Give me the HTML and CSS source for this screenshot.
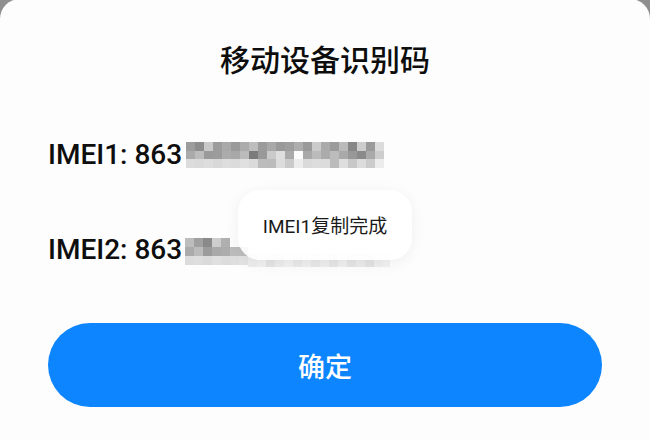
FILE: index.html
```html
<!DOCTYPE html>
<html lang="zh-CN">
<head>
<meta charset="utf-8">
<title>移动设备识别码</title>
<link rel="stylesheet" href="styles.css">
</head>
<body>
<div class="sheet">
  <h1 class="title">移动设备识别码</h1>
  <div class="row row-first">
    <span class="label">IMEI1: 863</span>
    <svg class="mosaic" width="198" height="26" viewBox="0 0 198 26" shape-rendering="crispEdges">
      <g>
        <rect x="0" y="0" width="9" height="9" fill="#9d9d9d"/><rect x="9" y="0" width="9" height="9" fill="#8d8d8d"/><rect x="18" y="0" width="9" height="9" fill="#c9c9c9"/><rect x="27" y="0" width="9" height="9" fill="#9c9c9c"/><rect x="36" y="0" width="9" height="9" fill="#a9a9a9"/><rect x="45" y="0" width="9" height="9" fill="#9a9a9a"/><rect x="54" y="0" width="9" height="9" fill="#ababab"/><rect x="63" y="0" width="9" height="9" fill="#bdbdbd"/><rect x="72" y="0" width="9" height="9" fill="#9b9b9b"/><rect x="81" y="0" width="9" height="9" fill="#a8a8a8"/><rect x="90" y="0" width="9" height="9" fill="#999"/><rect x="99" y="0" width="9" height="9" fill="#9e9e9e"/><rect x="108" y="0" width="9" height="9" fill="#adadad"/><rect x="117" y="0" width="9" height="9" fill="#9a9a9a"/><rect x="126" y="0" width="9" height="9" fill="#cbcbcb"/><rect x="135" y="0" width="9" height="9" fill="#aaa"/><rect x="144" y="0" width="9" height="9" fill="#9b9b9b"/><rect x="153" y="0" width="9" height="9" fill="#bababa"/><rect x="162" y="0" width="9" height="9" fill="#878787"/><rect x="171" y="0" width="9" height="9" fill="#cdcdcd"/><rect x="180" y="0" width="9" height="9" fill="#9a9a9a"/><rect x="189" y="0" width="9" height="9" fill="#dcdcdc"/>
        <rect x="0" y="9" width="9" height="8" fill="#aaa"/><rect x="9" y="9" width="9" height="8" fill="#bcbcbc"/><rect x="18" y="9" width="9" height="8" fill="#9a9a9a"/><rect x="27" y="9" width="9" height="8" fill="#9c9c9c"/><rect x="36" y="9" width="9" height="8" fill="#acacac"/><rect x="45" y="9" width="9" height="8" fill="#a8a8a8"/><rect x="54" y="9" width="9" height="8" fill="#bbb"/><rect x="63" y="9" width="9" height="8" fill="#7b7b7b"/><rect x="72" y="9" width="9" height="8" fill="#999"/><rect x="81" y="9" width="9" height="8" fill="#cacaca"/><rect x="90" y="9" width="9" height="8" fill="#dedede"/><rect x="99" y="9" width="9" height="8" fill="#aaa"/><rect x="108" y="9" width="9" height="8" fill="#fdfdfd"/><rect x="117" y="9" width="9" height="8" fill="#a9a9a9"/><rect x="126" y="9" width="9" height="8" fill="#bbb"/><rect x="135" y="9" width="9" height="8" fill="#ababab"/><rect x="144" y="9" width="9" height="8" fill="#bcbcbc"/><rect x="153" y="9" width="9" height="8" fill="#a9a9a9"/><rect x="162" y="9" width="9" height="8" fill="#989898"/><rect x="171" y="9" width="9" height="8" fill="#8a8a8a"/><rect x="180" y="9" width="9" height="8" fill="#aaa"/><rect x="189" y="9" width="9" height="8" fill="#cdcdcd"/>
        <rect x="0" y="17" width="9" height="9" fill="#dcdcdc"/><rect x="9" y="17" width="9" height="9" fill="#dadada"/><rect x="18" y="17" width="9" height="9" fill="#ddd"/><rect x="27" y="17" width="9" height="9" fill="#d8d8d8"/><rect x="36" y="17" width="9" height="9" fill="#ddd"/><rect x="45" y="17" width="9" height="9" fill="#dbdbdb"/><rect x="54" y="17" width="9" height="9" fill="#e0e0e0"/><rect x="63" y="17" width="9" height="9" fill="#dadada"/><rect x="72" y="17" width="9" height="9" fill="#bcbcbc"/><rect x="81" y="17" width="9" height="9" fill="#bbb"/><rect x="90" y="17" width="9" height="9" fill="#dcdcdc"/><rect x="99" y="17" width="9" height="9" fill="#cacaca"/><rect x="108" y="17" width="9" height="9" fill="#ececec"/><rect x="117" y="17" width="9" height="9" fill="#dadada"/><rect x="126" y="17" width="9" height="9" fill="#ddd"/><rect x="135" y="17" width="9" height="9" fill="#dcdcdc"/><rect x="144" y="17" width="9" height="9" fill="#bbb"/><rect x="153" y="17" width="9" height="9" fill="#dedede"/><rect x="162" y="17" width="9" height="9" fill="#c8c8c8"/><rect x="171" y="17" width="9" height="9" fill="#dcdcdc"/><rect x="180" y="17" width="9" height="9" fill="#cbcbcb"/><rect x="189" y="17" width="9" height="9" fill="#ececec"/>
      </g>
    </svg>
  </div>
  <div class="row row-second">
    <span class="label">IMEI2: 863</span>
    <svg class="mosaic" width="205" height="30" viewBox="0 0 205 30" shape-rendering="crispEdges">
      <g>
        <rect x="0" y="0" width="9" height="9" fill="#bdbdbd"/><rect x="9" y="0" width="9" height="9" fill="#a0a0a0"/><rect x="18" y="0" width="9" height="9" fill="#8a8a8a"/><rect x="27" y="0" width="9" height="9" fill="#cdcdcd"/><rect x="36" y="0" width="9" height="9" fill="#b0b0b0"/>
        <rect x="0" y="9" width="9" height="9" fill="#ababab"/><rect x="9" y="9" width="9" height="9" fill="#bcbcbc"/><rect x="18" y="9" width="9" height="9" fill="#9c9c9c"/><rect x="27" y="9" width="9" height="9" fill="#a9a9a9"/><rect x="36" y="9" width="9" height="9" fill="#acacac"/><rect x="45" y="9" width="9" height="9" fill="#bcbcbc"/><rect x="54" y="9" width="9" height="9" fill="#bdbdbd"/>
        <rect x="0" y="18" width="9" height="9" fill="#dcdcdc"/><rect x="9" y="18" width="9" height="9" fill="#dedede"/><rect x="18" y="18" width="9" height="9" fill="#dadada"/><rect x="27" y="18" width="9" height="9" fill="#e0e0e0"/><rect x="36" y="18" width="9" height="9" fill="#dcdcdc"/><rect x="45" y="18" width="9" height="9" fill="#dedede"/><rect x="54" y="18" width="9" height="9" fill="#e2e2e2"/>
        <rect x="63" y="15" width="9" height="14" fill="#ececec"/><rect x="72" y="15" width="9" height="14" fill="#f0f0f0"/><rect x="81" y="15" width="9" height="14" fill="#e4e4e4"/><rect x="90" y="15" width="9" height="14" fill="#ececec"/><rect x="99" y="15" width="9" height="14" fill="#f1f1f1"/><rect x="108" y="15" width="9" height="14" fill="#e9e9e9"/><rect x="117" y="15" width="9" height="14" fill="#efefef"/><rect x="126" y="15" width="9" height="14" fill="#e8e8e8"/><rect x="135" y="15" width="9" height="14" fill="#eeeeee"/><rect x="144" y="15" width="9" height="14" fill="#e6e6e6"/><rect x="153" y="15" width="9" height="14" fill="#efefef"/><rect x="162" y="15" width="9" height="14" fill="#e5e5e5"/><rect x="171" y="15" width="9" height="14" fill="#ebebeb"/><rect x="180" y="15" width="9" height="14" fill="#e3e3e3"/><rect x="189" y="15" width="9" height="14" fill="#eeeeee"/><rect x="198" y="15" width="7" height="14" fill="#f2f2f2"/>
      </g>
    </svg>
  </div>
  <button class="confirm" type="button">确定</button>
  <div class="toast">IMEI1复制完成</div>
</div>
</body>
</html>
```

FILE: styles.css
```css
html, body {
  margin: 0;
  padding: 0;
  height: 100%;
}

body {
  background: #8f8f8f;
  overflow: hidden;
  font-family: Roboto, "Noto Sans", "Noto Sans CJK SC", sans-serif;
  color: #111;
}

.sheet {
  position: relative;
  box-sizing: border-box;
  height: 460px;
  margin-top: -1px;
  background: #fdfdfd;
  border-radius: 20px 20px 0 0;
  padding: 39px 48px 0;
  display: flex;
  flex-direction: column;
}

.title {
  margin: 0;
  text-align: center;
  font-family: "Noto Sans CJK SC", sans-serif;
  font-size: 30px;
  font-weight: 500;
  line-height: 40px;
  color: #0d0d0d;
}

.row {
  display: flex;
  align-items: center;
  height: 40px;
}

.row-first {
  margin-top: 57px;
}

.row-second {
  margin-top: 55px;
}

.label {
  font-family: Roboto, "Noto Sans", sans-serif;
  font-size: 28px;
  font-weight: 500;
  line-height: 40px;
  color: #0e0e0e;
  white-space: nowrap;
}

.mosaic {
  margin-left: 4px;
  flex: none;
}

.row-second .mosaic {
  margin-left: 3px;
  margin-top: 6px;
}

.confirm {
  margin-top: 53px;
  height: 84px;
  border: none;
  border-radius: 42px;
  background: #0d85ff;
  color: #fff;
  font-family: "Noto Sans CJK SC", sans-serif;
  font-size: 27px;
  font-weight: 500;
  padding: 0;
  width: 100%;
}

.toast {
  position: absolute;
  left: 238px;
  top: 191px;
  width: 174px;
  height: 70px;
  box-sizing: border-box;
  border-radius: 22px;
  background: rgba(255, 255, 255, 0.9);
  box-shadow: 0 3px 16px rgba(0, 0, 0, 0.06);
  display: flex;
  align-items: center;
  justify-content: center;
  font-family: Roboto, "Noto Sans CJK SC", sans-serif;
  font-size: 19px;
  color: #1a1a1a;
  padding-bottom: 2px;
}
```
